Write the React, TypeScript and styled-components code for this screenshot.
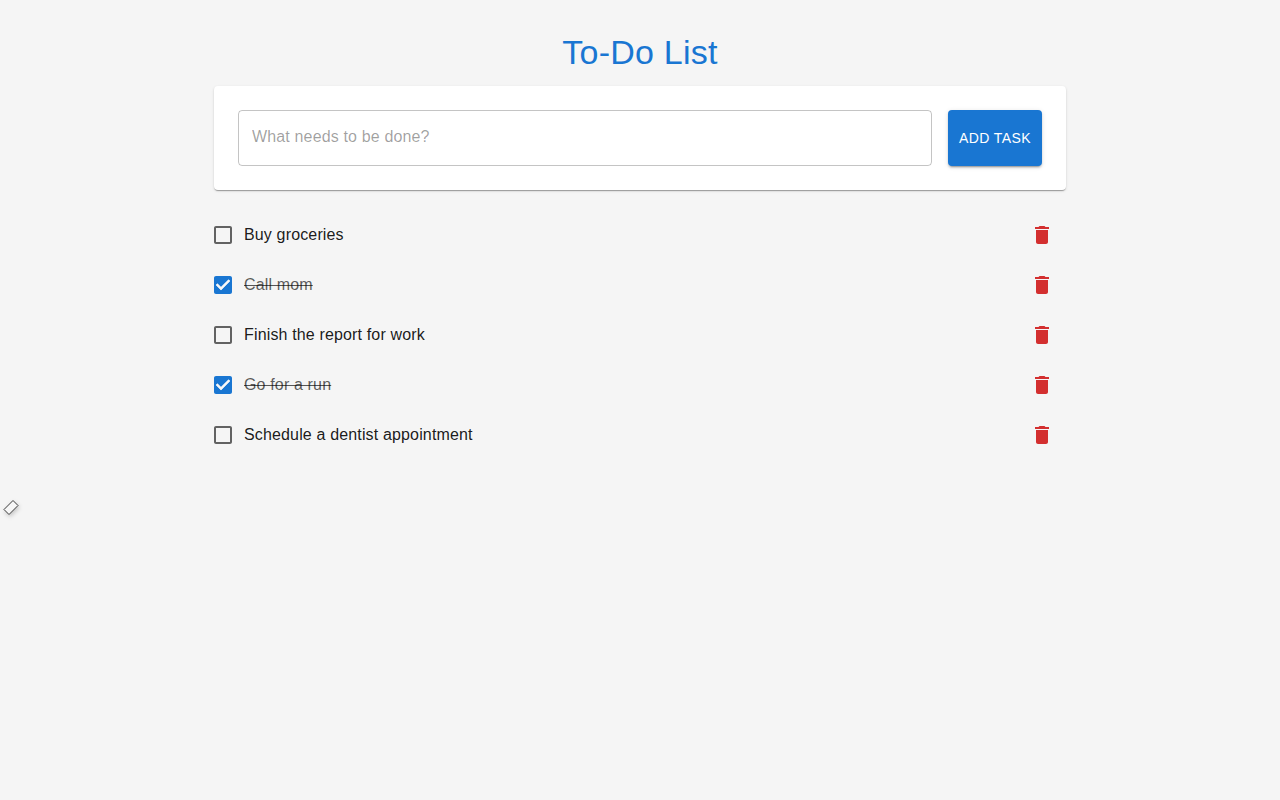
import React, { useState } from "react";
import styled, { createGlobalStyle } from "styled-components";

const GlobalStyle = createGlobalStyle`
  *, *::before, *::after { box-sizing: border-box; }
  body {
    margin: 0;
    background: #f5f5f5;
    color: rgba(0, 0, 0, 0.9);
    font-family: "Liberation Sans", Helvetica, Arial, sans-serif;
    -webkit-font-smoothing: antialiased;
  }
`;

const Page = styled.main`
  position: relative;
  min-height: 800px;
  padding-top: 31px;
`;

const Container = styled.div`
  width: 852px;
  margin: 0 auto;
`;

const Title = styled.h1`
  margin: 0 0 13px;
  color: #1976d2;
  font-size: 34px;
  font-weight: 400;
  line-height: 42px;
  letter-spacing: 0.25px;
  text-align: center;
`;

const TaskForm = styled.form`
  display: flex;
  gap: 16px;
  padding: 24px;
  background: #fff;
  border-radius: 4px;
  box-shadow: 0 2px 1px -1px rgba(0, 0, 0, 0.2), 0 1px 1px rgba(0, 0, 0, 0.14),
    0 1px 3px rgba(0, 0, 0, 0.12);
`;

const TaskInput = styled.input`
  flex: 1;
  min-width: 0;
  height: 56px;
  padding: 0 13px 3px;
  border: 1px solid rgba(0, 0, 0, 0.23);
  border-radius: 4px;
  background: transparent;
  color: inherit;
  font: 400 16px "Liberation Sans", Helvetica, Arial, sans-serif;
  letter-spacing: 0.15px;
  outline: none;

  &::placeholder {
    color: rgba(0, 0, 0, 0.38);
    opacity: 1;
  }
`;

const AddButton = styled.button`
  width: 94px;
  height: 56px;
  padding: 0;
  border: 0;
  border-radius: 4px;
  background: #1976d2;
  color: #fff;
  font: 400 14px "Liberation Sans", Helvetica, Arial, sans-serif;
  letter-spacing: 0.4px;
  text-transform: uppercase;
  white-space: nowrap;
  box-shadow: 0 3px 1px -2px rgba(0, 0, 0, 0.2), 0 2px 2px rgba(0, 0, 0, 0.14),
    0 1px 5px rgba(0, 0, 0, 0.12);
`;

const TaskList = styled.ul`
  margin: 20px 0 0;
  padding: 0;
  list-style: none;
`;

const TaskRow = styled.li`
  display: flex;
  align-items: center;
  height: 50px;
  padding-right: 12px;
`;

const IconButton = styled.button`
  display: flex;
  padding: 0;
  border: 0;
  background: none;
  cursor: pointer;
`;

const CheckButton = styled(IconButton)<{ $checked: boolean }>`
  margin: 0 9px 0 -3px;
  color: ${(p) => (p.$checked ? "#1976d2" : "rgba(0, 0, 0, 0.6)")};
`;

const DeleteButton = styled(IconButton)`
  color: #d32f2f;
`;

const Icon = styled.svg`
  display: block;
  width: 24px;
  height: 24px;
  fill: currentColor;
`;

const TaskText = styled.span<{ $done: boolean }>`
  flex: 1;
  font-size: 16px;
  line-height: 24px;
  letter-spacing: 0.15px;
  color: ${(p) => (p.$done ? "rgba(0, 0, 0, 0.65)" : "inherit")};
  text-decoration: ${(p) => (p.$done ? "line-through" : "none")};
`;

const FloatingMark = styled.svg`
  position: absolute;
  left: 0;
  top: 496px;
  width: 24px;
  height: 26px;
  filter: drop-shadow(1px 2px 2px rgba(0, 0, 0, 0.2));
`;

const BOX =
  "M19 5v14H5V5h14m0-2H5c-1.1 0-2 .9-2 2v14c0 1.1.9 2 2 2h14c1.1 0 2-.9 2-2V5c0-1.1-.9-2-2-2z";
const CHECKED =
  "M19 3H5c-1.11 0-2 .9-2 2v14c0 1.1.89 2 2 2h14c1.11 0 2-.9 2-2V5c0-1.1-.89-2-2-2zm-9 14l-5-5 1.41-1.41L10 14.17l7.59-7.59L19 8l-9 9z";
const TRASH = "M6 19c0 1.1.9 2 2 2h8c1.1 0 2-.9 2-2V7H6v12zM19 4h-3.5l-1-1h-5l-1 1H5v2h14V4z";

const initialTasks = [
  { id: 1, text: "Buy groceries", done: false },
  { id: 2, text: "Call mom", done: true },
  { id: 3, text: "Finish the report for work", done: false },
  { id: 4, text: "Go for a run", done: true },
  { id: 5, text: "Schedule a dentist appointment", done: false },
];

export default function App() {
  const [tasks, setTasks] = useState(initialTasks);
  const [draft, setDraft] = useState("");

  const addTask = (e: React.FormEvent) => {
    e.preventDefault();
    if (!draft.trim()) return;
    setTasks([...tasks, { id: Date.now(), text: draft.trim(), done: false }]);
    setDraft("");
  };

  return (
    <Page>
      <GlobalStyle />
      <Container>
        <Title>To-Do List</Title>
        <TaskForm onSubmit={addTask}>
          <TaskInput
            placeholder="What needs to be done?"
            value={draft}
            onChange={(e) => setDraft(e.target.value)}
          />
          <AddButton type="submit">Add Task</AddButton>
        </TaskForm>
        <TaskList>
          {tasks.map((task) => (
            <TaskRow key={task.id}>
              <CheckButton
                type="button"
                role="checkbox"
                aria-checked={task.done}
                $checked={task.done}
                onClick={() =>
                  setTasks(tasks.map((t) => (t.id === task.id ? { ...t, done: !t.done } : t)))
                }
              >
                <Icon viewBox="0 0 24 24">
                  <path d={task.done ? CHECKED : BOX} />
                  {task.done && (
                    <path d="M5.7 11.3L10 15.6L18.3 7.3" fill="none" stroke="#f8f8f8" strokeWidth="2.2" />
                  )}
                </Icon>
              </CheckButton>
              <TaskText $done={task.done}>{task.text}</TaskText>
              <DeleteButton
                type="button"
                onClick={() => setTasks(tasks.filter((t) => t.id !== task.id))}
              >
                <Icon viewBox="0 0 24 24">
                  <path d={TRASH} />
                </Icon>
              </DeleteButton>
            </TaskRow>
          ))}
        </TaskList>
      </Container>
      <FloatingMark viewBox="0 0 24 26">
        <path
          d="M13 4.5L18 9.5L9 18.5L4 13.5Z"
          fill="#f7f7f7"
          stroke="#3a3a3a"
          strokeWidth="1"
        />
      </FloatingMark>
    </Page>
  );
}
